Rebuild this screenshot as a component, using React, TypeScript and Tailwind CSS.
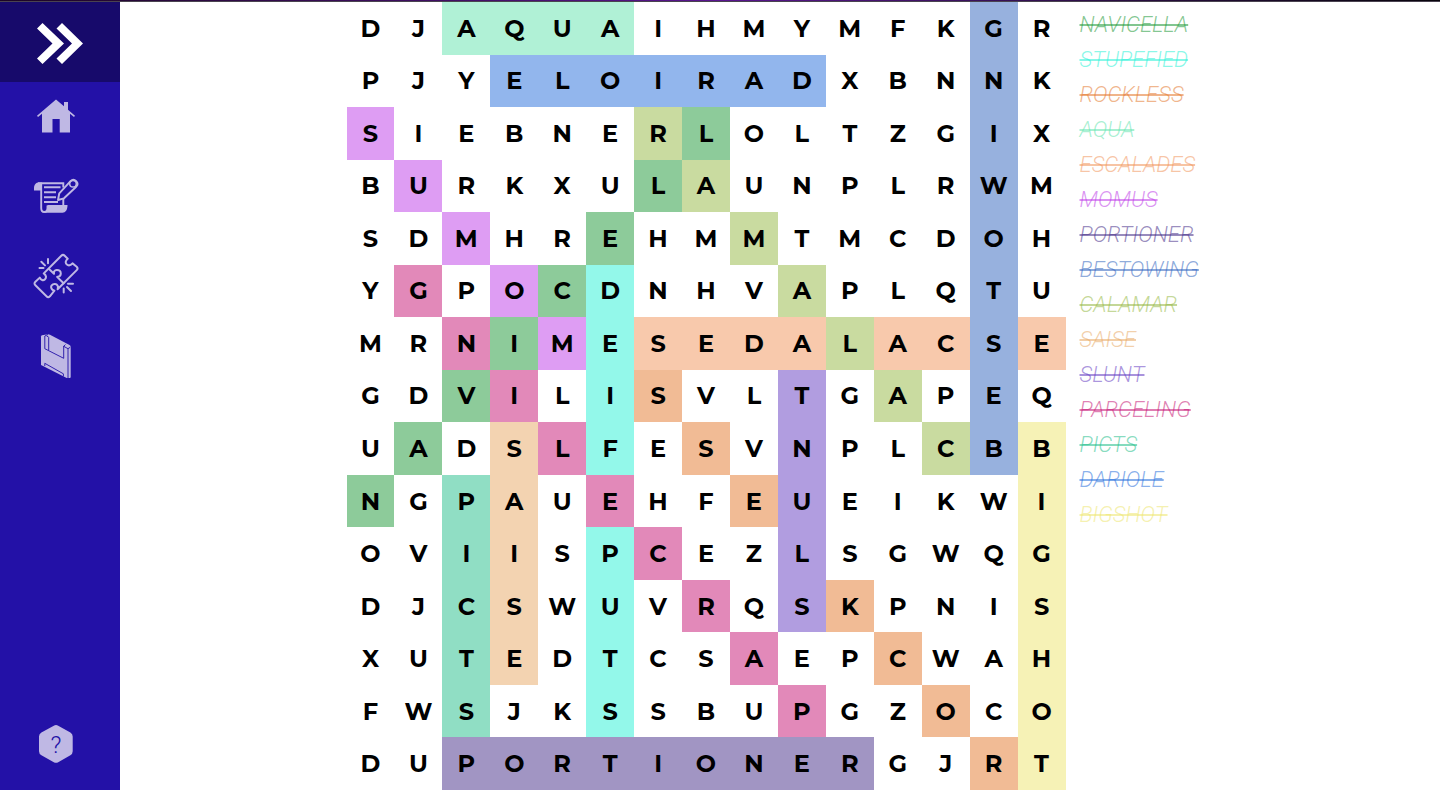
import type { ReactNode } from "react";

type Word = { text: string; cell: string; label: string; row: number; col: number; dr: number; dc: number };

const rows = [
  "DJAQUAIHMYMFKGR",
  "PJYELOIRADXBNNK",
  "SIEBNERLOLTZGIX",
  "BURKXULAUNPLRWM",
  "SDMHREHMMTMCDOH",
  "YGPOCDNHVAPLQTU",
  "MRNIMESEDALACSE",
  "GDVILISVLTGAPEQ",
  "UADSLFESVNPLCBB",
  "NGPAUEHFEUEIKWI",
  "OVIISPCEZLSGWQG",
  "DJCSWUVRQSKPNIS",
  "XUTEDTCSAEPCWAH",
  "FWSJKSSBUPGZOCO",
  "DUPORTIONERGJRT",
];

const words: Word[] = [
  { text: "NAVICELLA", cell: "bg-[#8dcb9a]", label: "text-[#1b9735]/55", row: 9, col: 0, dr: -1, dc: 1 },
  { text: "STUPEFIED", cell: "bg-[#93f8ea]", label: "text-[#27f1d5]/55", row: 13, col: 5, dr: -1, dc: 0 },
  { text: "ROCKLESS", cell: "bg-[#f1bb95]", label: "text-[#e3772b]/55", row: 14, col: 13, dr: -1, dc: -1 },
  { text: "AQUA", cell: "bg-[#b0f1d6]", label: "text-[#61e3ad]/55", row: 0, col: 2, dr: 0, dc: 1 },
  { text: "ESCALADES", cell: "bg-[#f8c9ac]", label: "text-[#f19359]/55", row: 6, col: 14, dr: 0, dc: -1 },
  { text: "MOMUS", cell: "bg-[#de9df3]", label: "text-[#bd3be7]/55", row: 6, col: 4, dr: -1, dc: -1 },
  { text: "PORTIONER", cell: "bg-[#a195c3]", label: "text-[#432b87]/55", row: 14, col: 2, dr: 0, dc: 1 },
  { text: "BESTOWING", cell: "bg-[#97b1de]", label: "text-[#2f63bd]/55", row: 8, col: 13, dr: -1, dc: 0 },
  { text: "CALAMAR", cell: "bg-[#c9dba0]", label: "text-[#93b741]/55", row: 8, col: 12, dr: -1, dc: -1 },
  { text: "SAISE", cell: "bg-[#f3d3b1]", label: "text-[#e7a763]/55", row: 8, col: 3, dr: 1, dc: 0 },
  { text: "SLUNT", cell: "bg-[#b19de0]", label: "text-[#633bc1]/55", row: 11, col: 9, dr: -1, dc: 0 },
  { text: "PARCELING", cell: "bg-[#e289b9]", label: "text-[#c51373]/55", row: 13, col: 9, dr: -1, dc: -1 },
  { text: "PICTS", cell: "bg-[#90dec4]", label: "text-[#21bd89]/55", row: 9, col: 2, dr: 1, dc: 0 },
  { text: "DARIOLE", cell: "bg-[#92b6ed]", label: "text-[#256ddb]/55", row: 1, col: 9, dr: 0, dc: -1 },
  { text: "BIGSHOT", cell: "bg-[#f6f2b6]", label: "text-[#ede56d]/55", row: 8, col: 14, dr: 1, dc: 0 },
];

// Where two words cross, the later one colours the cell.
const fills: Record<string, string> = {};
for (const w of words) {
  for (let i = 0; i < w.text.length; i++) {
    fills[`${w.row + w.dr * i}-${w.col + w.dc * i}`] = w.cell;
  }
}

function NavLink({ label, children }: { label: string; children: ReactNode }) {
  return (
    <a href="#" aria-label={label} className="block size-12 text-[#bfb8e4]">
      <svg viewBox="0 0 48 48" className="size-12" fill="none" aria-hidden="true">
        {children}
      </svg>
    </a>
  );
}

function Sidebar() {
  return (
    <aside className="flex w-30 shrink-0 flex-col bg-[#2311a7]">
      <button type="button" aria-label="Expand menu" className="flex h-20 w-full shrink-0 items-center justify-center bg-[#170a6b]">
        <svg viewBox="0 0 48 48" className="size-12" fill="#fff" aria-hidden="true">
          <path d="M1 10.500 6.500 5 28 25.500 6.500 46 1 40.500 16.500 25.500Z" />
          <path d="M20.500 10.500 26 5 47 25.500 26 46 20.500 40.500 36 25.500Z" />
        </svg>
      </button>
      <nav className="flex grow flex-col gap-8 pt-2.5 pb-[22px] pl-8">
        <NavLink label="Home">
          <path
            fill="currentColor"
            d="M24 7.500 32 14.300V10h4v7.800l7 6-1 1.200-4-3.300v18.800H27.700V27h-7.200v13.500H10V21.700L6 25l-1-1.200Z"
          />
        </NavLink>
        <NavLink label="Word lists">
          <path fill="currentColor" d="M2 18.500V16c0-3.500 2-5.500 5-5.500h3v8Z" />
          <path fill="currentColor" d="M15.500 33h20c0 5-2 7.700-5 7.700H12c2.500-.700 3.500-3 3.500-7.700Z" />
          <path
            stroke="currentColor"
            strokeWidth="1.900"
            d="M6 11.300h25.300v4.200M31.300 26v7.500M9.200 11.500V36c0 2.500 1.200 4 3 4s3.300-1.500 3.300-4v-2.500"
          />
          <path stroke="currentColor" strokeWidth="1.900" d="M12 15.200h16.500M12 20.200h12M12 25.200h12M12 30h14" />
          <path
            stroke="currentColor"
            strokeWidth="1.900"
            strokeLinejoin="round"
            d="m26 28 1.300-6.700L38.500 9.200c2-2 4-1.700 5.700 0 1.800 1.800 1.800 3.600 0 5.500L32 26.300Z"
          />
          <circle cx="41" cy="11.700" r="3.300" stroke="currentColor" strokeWidth="1.500" />
        </NavLink>
        <NavLink label="Puzzles">
          <g stroke="currentColor" strokeWidth="2" strokeLinecap="round" strokeLinejoin="round">
            <path d="M29.300 3.700c1.200-1.200 2.200-1.200 3.400 0l3 3c-2.500 2.300-2.500 4.300-.9 5.700 1.600 1.600 3.900 1.200 5.700-1l4.200 3.300c1.200 1.200 1.200 2.200 0 3.400L25.600 37.200c1-3.200-.4-5-2.600-5.200-2.800-.2-4.800 2-3.400 4.700.6 1.200 1.600 1.600 2.800 2l-4.500 5.600c-1.200 1.200-2.200 1.200-3.400 0L3.400 33.200c-1.200-1.200-1.200-2.200 0-3.400l4.400-4.200c1.200 2.600 3.400 3.200 5 1.800 1.900-1.700 1.500-4-1-6Z" />
            <path d="m17.300 17.300 4.700 4.500c-.3-2.300.6-3.700 2.600-3.900 2.600-.2 4.300 1.400 4.200 3.800-.1 2-1.700 3-3.700 3.200l6.500 6.400" />
            <path d="m9.300 9.700 3.700 3.700M16 7v4.300M7.500 16h4M36 31.700h5M35 35l4 4M31.700 36.500v4" />
          </g>
        </NavLink>
        <NavLink label="Save">
          <path
            fill="currentColor"
            d="M9 4.500q0-1 1-1.300l6-1q1 0 2 .5L37.500 13q1.200.7 1.200 2v30q0 1-1 1h-3L9 33Z"
          />
          <path
            stroke="#2311a7"
            strokeWidth="0.900"
            strokeLinejoin="round"
            d="M16 2.500 12.800 4v12.700l18.900 9.600V14M16.700 18V5.500q0-1-2-1.300M33.500 12.500l-1.800 1.800 4.300 2.400V46M36 16.700l2.200-1.400M12.800 34v-2.700l18.600 10.500v2.700"
          />
        </NavLink>
        <div className="mt-auto">
          <NavLink label="Help">
            <path
              fill="currentColor"
              d="M21.800 5.700q2.200-1.300 4.400 0l12.200 6.900q2.300 1.300 2.300 3.900v14.800q0 2.600-2.300 3.900L26.200 42.200q-2.200 1.300-4.400 0L9.400 35.200Q7 33.900 7 31.300V16.500q0-2.600 2.400-3.900Z"
            />
            <text x="24" y="33" textAnchor="middle" fill="#2311a7" className="font-['Roboto',sans-serif] text-2xl font-light">
              ?
            </text>
          </NavLink>
        </div>
      </nav>
    </aside>
  );
}

function Board() {
  return (
    <div className="grid aspect-[719/788] h-full grid-cols-15 grid-rows-15 font-['Montserrat','Inter',sans-serif] text-2xl leading-[31px] font-bold text-black">
      {rows.flatMap((line, r) =>
        line.split("").map((letter, c) => (
          <div key={`${r}-${c}`} className={`flex items-center justify-center ${fills[`${r}-${c}`] ?? ""}`}>
            {letter}
          </div>
        )),
      )}
    </div>
  );
}

export default function App() {
  return (
    <div className="flex h-screen flex-col overflow-hidden bg-white">
      <div className="h-0.5 shrink-0 border-b border-[#4a4350] bg-linear-to-r from-[#1c0526] via-[#5a1590] to-[#08040c]" />
      <div className="flex min-h-0 grow">
        <Sidebar />
        <main className="flex min-w-0 grow justify-center gap-3.5">
          <Board />
          <ul className="w-[134px] pt-[5px] font-['Roboto',sans-serif] text-[22px] leading-[35px] font-light italic">
            {words.map((w) => (
              <li key={w.text} className={`line-through decoration-2 ${w.label}`}>
                {w.text}
              </li>
            ))}
          </ul>
        </main>
      </div>
    </div>
  );
}
